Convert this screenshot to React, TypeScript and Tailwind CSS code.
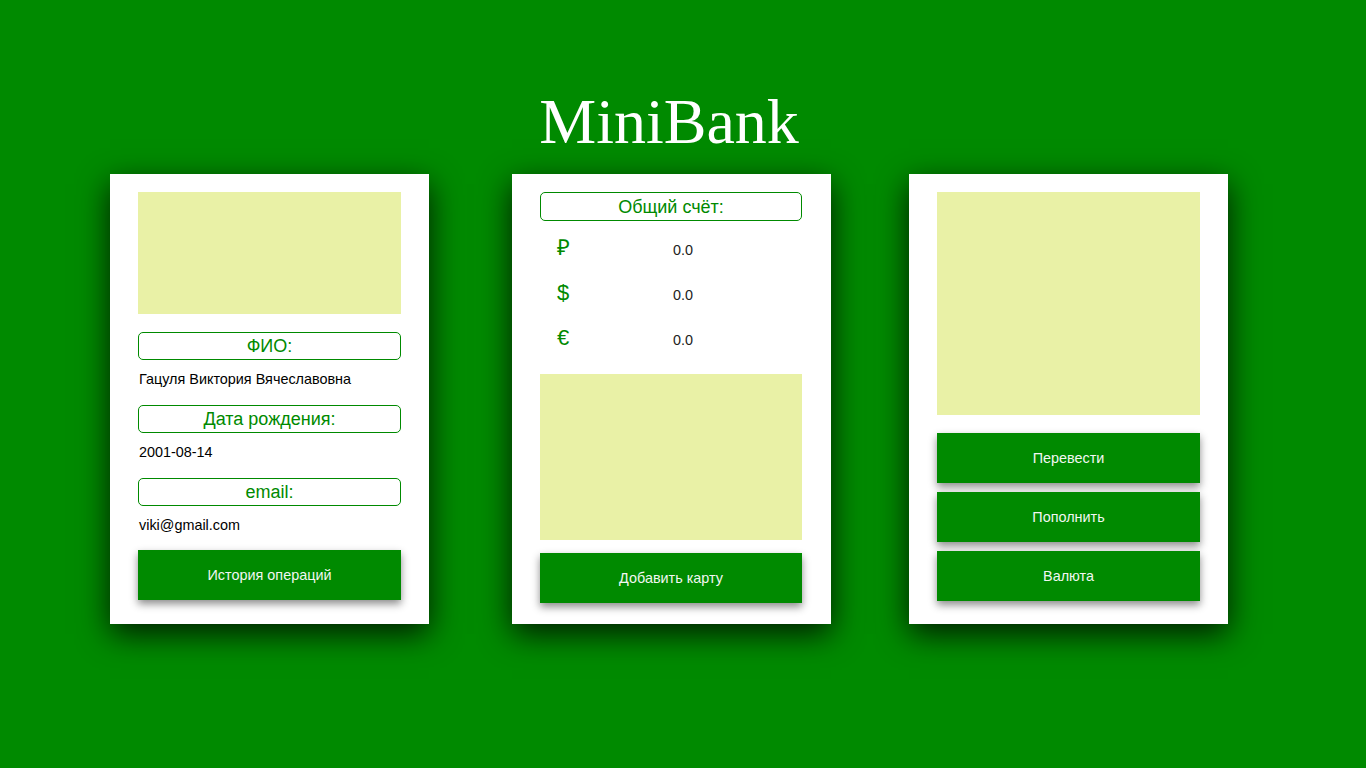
function Label({ children, className = "" }: { children: React.ReactNode; className?: string }) {
  return (
    <div
      className={
        "flex items-center justify-center rounded-[5px] border border-[#008a00] text-[18px] leading-[22px] text-[#008a00] " +
        className
      }
    >
      {children}
    </div>
  );
}

function GreenButton({ children, className = "" }: { children: React.ReactNode; className?: string }) {
  return (
    <button
      className={
        "flex h-[50px] w-full items-center justify-center bg-[#008a00] pt-[2px] text-[14.4px] text-[#f2f7f2] shadow-[0_4px_8px_rgba(0,0,0,0.45)] " +
        className
      }
    >
      {children}
    </button>
  );
}

const balances = [
  { sym: "₽", value: "0.0" },
  { sym: "$", value: "0.0" },
  { sym: "€", value: "0.0" },
];

export default function App() {
  return (
    <div
      className="min-h-screen w-full bg-[#008a00]"
      style={{ fontFamily: '"Liberation Sans", Arial, sans-serif' }}
    >
      <div className="w-[1338px] pt-[90px]">
        <h1
          className="text-center text-[64px] leading-[64px] text-white"
          style={{ fontFamily: '"Liberation Serif", "Times New Roman", serif' }}
        >
          MiniBank
        </h1>

        <div className="mt-[20px] flex">
          {/* profile */}
          <div className="ml-[110px] flex h-[450px] w-[319px] flex-col bg-white px-[28px] pt-[18px] shadow-[0_10px_30px_rgba(0,0,0,0.8)]">
            <div className="h-[122px] w-full bg-[#e9f1a6]" />
            <Label className="mt-[18px] h-[28px]">ФИО:</Label>
            <p className="mt-[9px] pl-px text-[14.4px] leading-[20px] text-black">Гацуля Виктория Вячеславовна</p>
            <Label className="mt-[16px] h-[28px]">Дата рождения:</Label>
            <p className="mt-[9px] pl-px text-[14.4px] leading-[20px] text-black">2001-08-14</p>
            <Label className="mt-[16px] h-[28px]">email:</Label>
            <p className="mt-[9px] pl-px text-[14.4px] leading-[20px] text-black">viki@gmail.com</p>
            <GreenButton className="mt-[15px]">История операций</GreenButton>
          </div>

          {/* balance */}
          <div className="ml-[83px] flex h-[450px] w-[319px] flex-col bg-white pl-[28px] pr-[29px] pt-[18px] shadow-[0_10px_30px_rgba(0,0,0,0.8)]">
            <Label className="h-[29px]">Общий счёт:</Label>
            <div className="mt-[4px]">
              {balances.map((b) => (
                <div key={b.sym} className="flex h-[45px] items-center">
                  <div className="flex items-baseline">
                    <span className="w-[46px] text-center text-[22px] text-[#008a00]">{b.sym}</span>
                    <span className="pl-[87px] text-[14.4px] text-[#222]">{b.value}</span>
                  </div>
                </div>
              ))}
            </div>
            <div className="mt-[14px] h-[166px] w-full bg-[#e9f1a6]" />
            <GreenButton className="mt-[13px]">Добавить карту</GreenButton>
          </div>

          {/* actions */}
          <div className="ml-[78px] flex h-[450px] w-[319px] flex-col bg-white px-[28px] pt-[18px] shadow-[0_10px_30px_rgba(0,0,0,0.8)]">
            <div className="h-[223px] w-full bg-[#e9f1a6]" />
            <div className="mt-[18px] flex flex-col gap-[9px]">
              <GreenButton>Перевести</GreenButton>
              <GreenButton>Пополнить</GreenButton>
              <GreenButton>Валюта</GreenButton>
            </div>
          </div>
        </div>
      </div>
    </div>
  );
}
